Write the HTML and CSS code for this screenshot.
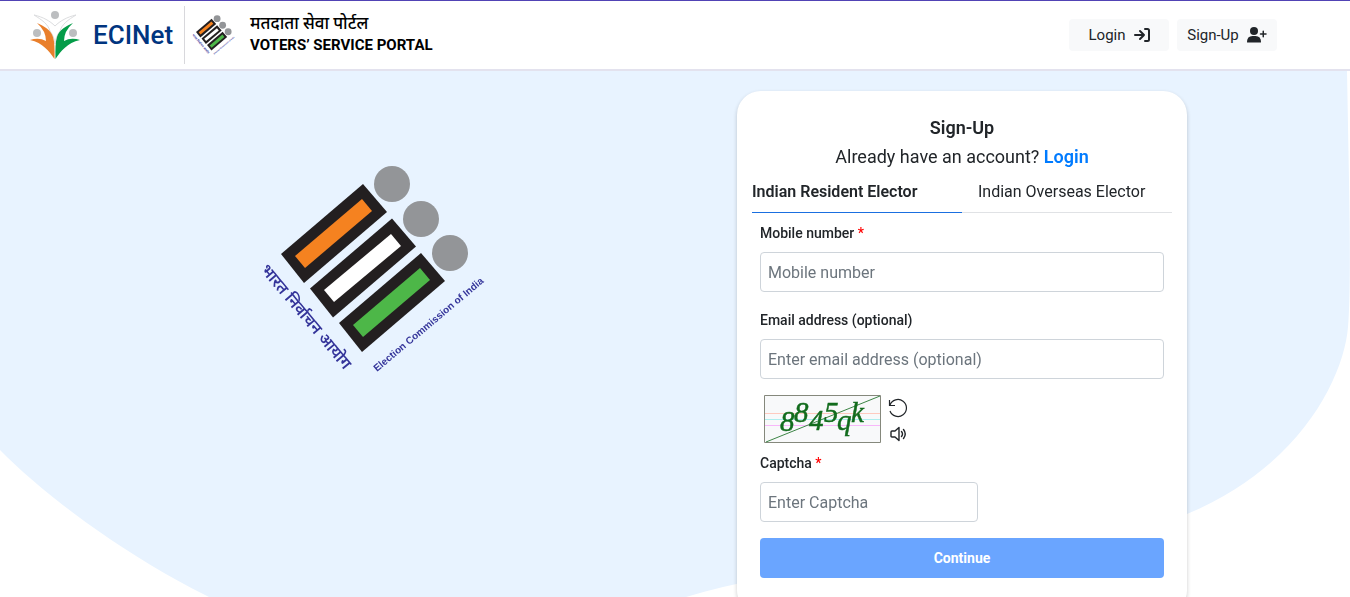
FILE: index.html
```html
<!DOCTYPE html>
<html lang="en">
<head>
    <meta charset="UTF-8">
    <meta name="viewport" content="width=device-width, initial-scale=1.0">
    <title>Voters' Service Portal</title>
    <link rel="stylesheet" href="styles.css">
</head>
<body>

    <header class="header">
        <div class="brand">
            <svg class="ecinet-logo" viewBox="0 0 51 50" aria-hidden="true">
                <path d="M5 5C14 7 21 11 26 16C31 11 38 7 47 5C39 10 33 14 31 21C28 25 26.500 29 26 34C25.500 29 24 25 21 21C19 14 13 10 5 5Z" fill="#fff" stroke="#dcdddf"/>
                <circle cx="26" cy="5" r="4" fill="#bcbec0"/>
                <circle cx="8" cy="23" r="4" fill="#bcbec0"/>
                <circle cx="44" cy="23" r="4" fill="#bcbec0"/>
                <path d="M8 13C15 16 22 20 24 27Q26 33 25.500 49C20 41 14 33 1 30Q10 27 17 31Q17 21 8 13Z" fill="#e97f2b"/>
                <path d="M44 13C37 16 30 20 28 27Q26 33 26.500 49C32 41 38 33 51 30Q42 27 35 31Q35 21 44 13Z" fill="#049c48"/>
            </svg>
            <span class="brand-name">ECINet</span>
        </div>
        <div class="portal">
            <svg class="portal-logo" viewBox="0 0 226 212" aria-hidden="true"><use href="#eci-logo"/></svg>
            <div class="portal-name">
                <span class="portal-hi" lang="hi">मतदाता सेवा पोर्टल</span>
                <span class="portal-en">VOTERS’ SERVICE PORTAL</span>
            </div>
        </div>
        <nav class="header-actions">
            <button type="button" class="header-btn">Login
                <svg width="16" height="16" viewBox="0 0 16 16" fill="none" stroke="currentColor" stroke-width="2" stroke-linecap="round" stroke-linejoin="round">
                    <path d="M1 8h9M6 4l4 4-4 4M11 2h2.5q1.500 0 1.500 1.500v9q0 1.500-1.500 1.500h-2.500"/>
                </svg>
            </button>
            <button type="button" class="header-btn">Sign-Up
                <svg width="20" height="16" viewBox="0 0 20 16">
                    <circle cx="7" cy="4" r="4" fill="currentColor"/>
                    <path d="M0 15q0-6 5.500-6h3q5.500 0 5.500 6 0 .5-.5.5h-13q-.5 0-.5-.5Z" fill="currentColor"/>
                    <path d="M13.500 7h5.500M16.250 4.250v5.500" fill="none" stroke="currentColor" stroke-width="1.500" stroke-linecap="round"/>
                </svg>
            </button>
        </nav>
    </header>

    <main class="main">
        <svg class="main-bg" viewBox="0 0 1350 526" preserveAspectRatio="none" aria-hidden="true">
            <path d="M0 0H1347L1349 110Q1351 220 1348 256C1344 305 1302 395 1187 443C1030 490 840 480 686 526H209C120 482 40 420 0 379Z" fill="#e8f3ff"/>
        </svg>

        <div class="visual">
            <svg class="visual-logo" viewBox="0 0 226 212" role="img" aria-label="Election Commission of India">
                <g id="eci-logo">
                    <g fill="#231f20">
                        <path id="bar" d="M103 20 127 48 44 119 21 90Z"/>
                        <use href="#bar" x="29" y="34.500"/>
                        <use href="#bar" x="58" y="69"/>
                    </g>
                    <path d="M102 35 112 47 45 104 35 92Z" fill="#f58220"/>
                    <path d="M131 70 141 82 74 138 64 126Z" fill="#fff"/>
                    <path d="M160 104 170 116 103 173 93 161Z" fill="#4db748"/>
                    <circle cx="132" cy="20" r="18" fill="#939598"/>
                    <circle cx="161" cy="55" r="18" fill="#939598"/>
                    <circle cx="190" cy="89" r="18" fill="#939598"/>
                    <text class="logo-hi" transform="translate(0 106) rotate(50)" lang="hi">भारत निर्वाचन आयोग</text>
                    <text class="logo-en" transform="translate(117 208) rotate(-40)">Election Commission of India</text>
                </g>
            </svg>
        </div>

        <section class="card">
            <h1 class="card-title">Sign-Up</h1>
            <p class="card-sub">Already have an account? <a href="#">Login</a></p>

            <div class="tabs" role="tablist">
                <button type="button" class="tab active" role="tab" aria-selected="true">Indian Resident Elector</button>
                <button type="button" class="tab" role="tab" aria-selected="false">Indian Overseas Elector</button>
            </div>

            <form class="form">
                <div class="field">
                    <label for="mobile">Mobile number <span class="required">*</span></label>
                    <input type="tel" id="mobile" placeholder="Mobile number">
                </div>
                <div class="field">
                    <label for="email">Email address (optional)</label>
                    <input type="email" id="email" placeholder="Enter email address (optional)">
                </div>

                <div class="captcha">
                    <svg class="captcha-img" viewBox="0 0 117 48" role="img" aria-label="Captcha code">
                        <path d="M.5.5h116v47H.5Z" fill="#f8f9fa" stroke="#85887c"/>
                        <path d="M1 18.500h115" stroke="#ffcabf"/>
                        <path d="M1 24.500h115" stroke="#aeeeee"/>
                        <path d="M1 30.500h115" stroke="#f8b8fa"/>
                        <path d="M2 47 116 1" stroke="#3d8546"/>
                        <g class="captcha-text">
                            <text x="16" y="36">8</text>
                            <text x="30" y="27">8</text>
                            <text x="45" y="35">4</text>
                            <text x="60" y="27">5</text>
                            <text x="73" y="35">q</text>
                            <text x="87" y="27">k</text>
                        </g>
                    </svg>
                    <div class="captcha-actions">
                        <button type="button" class="icon-btn" aria-label="Refresh captcha">
                            <svg width="20" height="20" viewBox="0 0 20 20" fill="none" stroke="currentColor" stroke-width="1.200">
                                <path d="M2 7A8.500 8.500 0 1 1 2 13M1.500 2v5.500H7"/>
                            </svg>
                        </button>
                        <button type="button" class="icon-btn" aria-label="Play captcha">
                            <svg width="18" height="16" viewBox="0 0 18 16" fill="none" stroke="currentColor" stroke-width="1.400" stroke-linejoin="round" stroke-linecap="round">
                                <path d="M3 5h3l4-3.500v13L6 11H3q-1 0-1-1V6q0-1 1-1ZM12.500 5.500q2 2.500 0 5M14.500 3.500q3.500 4.500 0 9"/>
                            </svg>
                        </button>
                    </div>
                </div>

                <div class="field field-captcha">
                    <label for="captcha">Captcha <span class="required">*</span></label>
                    <input type="text" id="captcha" placeholder="Enter Captcha">
                </div>

                <button type="submit" class="submit-btn">Continue</button>
            </form>
        </section>
    </main>

</body>
</html>
```
FILE: styles.css
```css
* {
    box-sizing: border-box;
}

body {
    font-family: Roboto, "Noto Sans", Arial, sans-serif;
    margin: 0;
    height: 100vh;
    display: flex;
    flex-direction: column;
    color: #212529;
    background: #fff;
}

button,
input {
    font-family: inherit;
    font-size: 16px;
    color: inherit;
}

button {
    border: none;
    cursor: pointer;
}

/* header */
.header {
    display: flex;
    align-items: center;
    flex-shrink: 0;
    padding: 5px 73px 5px 29px;
    border-top: 1px solid #5143b5;
    border-bottom: 2px solid #e3e2ee;
    background: #fff;
}

.brand {
    display: flex;
    align-items: center;
    gap: 13px;
    height: 58px;
    padding-right: 11px;
    border-right: 1px solid #d8d8dc;
}

.ecinet-logo {
    width: 51px;
    height: 50px;
    overflow: visible;
}

.brand-name {
    font-size: 26px;
    font-weight: 500;
    color: #00357f;
}

.portal {
    display: flex;
    align-items: center;
    gap: 15px;
    padding-left: 7px;
}

.portal-logo {
    width: 43px;
    height: 42px;
    overflow: visible;
}

.portal-name {
    display: flex;
    flex-direction: column;
    padding-bottom: 2px;
    font-size: 15px;
    line-height: 22px;
    color: #000;
}

.portal-hi {
    font-size: 17px;
    font-weight: 500;
}

.portal-en {
    font-weight: 700;
}

.header-actions {
    display: flex;
    gap: 8px;
    margin-left: auto;
}

.header-btn {
    display: flex;
    align-items: center;
    justify-content: center;
    gap: 8px;
    width: 100px;
    height: 32px;
    padding: 0;
    font-size: 15px;
    border-radius: 4px;
    background: #f8f9fa;
}

/* main area */
.main {
    position: relative;
    display: flex;
    align-items: flex-start;
    flex: 1;
    min-height: 0;
    padding-top: 20px;
    padding-right: 163px;
    overflow-y: auto;
    scrollbar-width: none;
}

.main-bg {
    position: absolute;
    top: 0;
    left: 0;
    width: 100%;
    height: 100%;
    z-index: -1;
}

.visual {
    flex: 1;
    display: flex;
    justify-content: center;
    padding: 73px 0 0 8px;
}

.visual-logo {
    width: 226px;
    height: 212px;
    overflow: visible;
}

.logo-hi {
    font-family: "Noto Sans", sans-serif;
    font-size: 16px;
    font-weight: 600;
    fill: #34349a;
}

.logo-en {
    font-family: "Liberation Sans", Arial, sans-serif;
    font-size: 10px;
    font-weight: 700;
    fill: #34349a;
}

/* sign-up card */
.card {
    width: 450px;
    padding: 22px 15px 36px;
    background: #fff;
    border-radius: 24px;
    box-shadow: 0 2px 4px rgba(0, 0, 0, 0.2);
}

.card-title,
.card-sub {
    margin: 0;
    font-size: 18px;
    line-height: 29px;
    text-align: center;
}

.card-title {
    font-weight: 600;
}

.card-sub a {
    color: #007bff;
    font-weight: 600;
    text-decoration: none;
}

.tabs {
    display: flex;
}

.tab {
    width: 50%;
    padding: 9px 16px 8px;
    line-height: 24px;
    text-align: left;
    background: none;
    border-bottom: 1px solid #e0e2e5;
}

.tab.active {
    padding-left: 0;
    font-weight: 600;
    border-bottom-color: #1a6fe0;
}

.form {
    display: flex;
    flex-direction: column;
    padding: 10px 8px 0;
}

.field {
    display: flex;
    flex-direction: column;
    gap: 8px;
    margin-bottom: 18px;
}

.field label {
    font-size: 14px;
    line-height: 21px;
    font-weight: 500;
}

.required {
    color: #f00;
}

.field input {
    width: 100%;
    height: 40px;
    padding: 0 7px;
    border: 1px solid #ced4da;
    border-radius: 4px;
    background: #fff;
}

.field input::placeholder {
    color: #6c757d;
    opacity: 1;
}

.captcha {
    display: flex;
    gap: 7px;
    margin: -2px 4px 0;
    height: 58px;
}

.captcha-img {
    width: 117px;
    height: 48px;
}

.captcha-text {
    font-family: "Liberation Serif", serif;
    font-size: 29px;
    font-style: italic;
    fill: #126c1d;
    stroke: #126c1d;
    stroke-width: 0.5;
}

.captcha-actions {
    display: flex;
    flex-direction: column;
    gap: 6px;
    padding-top: 3px;
}

.icon-btn {
    display: flex;
    justify-content: center;
    align-items: center;
    width: 20px;
    height: 20px;
    padding: 0;
    background: none;
}

.field-captcha {
    margin-bottom: 16px;
}

.field-captcha input {
    width: 54%;
}

.submit-btn {
    height: 40px;
    font-size: 14px;
    font-weight: 700;
    color: #fff;
    background: #6aa5ff;
    border-radius: 4px;
}
```
